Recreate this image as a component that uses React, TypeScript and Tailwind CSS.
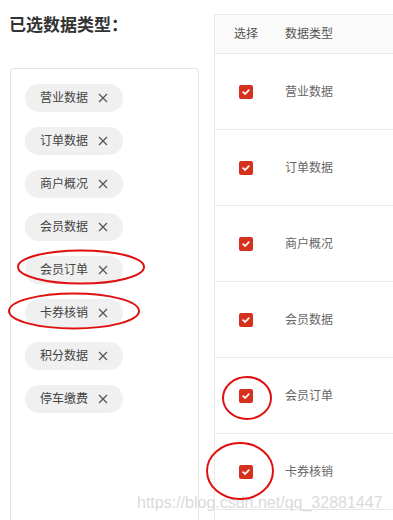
import React from "react";

const tags = ["营业数据", "订单数据", "商户概况", "会员数据", "会员订单", "卡券核销", "积分数据", "停车缴费"];
const rows = ["营业数据", "订单数据", "商户概况", "会员数据", "会员订单", "卡券核销"];

const font = { fontFamily: '"Liberation Sans", "Noto Sans CJK SC", sans-serif' };

function Check() {
  return (
    <span className="flex h-[14px] w-[14px] items-center justify-center rounded-[2px] bg-[#d7301c]">
      <svg width="10" height="10" viewBox="0 0 10 10" fill="none">
        <path d="M2.2 5.1 L4.2 7 L7.8 3.2" stroke="white" strokeWidth="1.8" strokeLinecap="round" strokeLinejoin="round" />
      </svg>
    </span>
  );
}

export default function App() {
  return (
    <div className="relative h-[520px] w-[393px] overflow-hidden bg-white" style={font}>
      <div className="flex">
        <div className="flex w-[199px] shrink-0 flex-col">
          <div className="pl-[9px] pt-[13px] text-[17px] font-bold leading-[26px] text-[#333]">已选数据类型：</div>
          <div className="ml-[10px] mt-[29px] h-[460px] rounded-t-[4px] border border-b-0 border-[#e4e4e4] pl-[14px] pt-[15px]">
            <div className="flex flex-col items-start gap-[15px]">
              {tags.map((t) => (
                <div key={t} className="flex h-[28px] items-center rounded-full bg-[#f0f0f0] pl-[15px] pr-[15px] text-[12px] text-[#444]">
                  <span>{t}</span>
                  <svg className="ml-[10px]" width="10" height="10" viewBox="0 0 10 10">
                    <path d="M1 1 L9 9 M9 1 L1 9" stroke="#555" strokeWidth="1.2" />
                  </svg>
                </div>
              ))}
            </div>
          </div>
        </div>
        <div className="ml-[15px] mt-[14px] w-[200px] shrink-0 border-l border-t border-[#e8e8e8]">
          <div className="flex h-[39px] items-center border-b border-[#e8e8e8] bg-[#fafafa] text-[12px] text-[#555]">
            <span className="w-[70px] pl-[19px]">选择</span>
            <span>数据类型</span>
          </div>
          {rows.map((r) => (
            <div key={r} className="flex h-[76px] items-center border-b border-[#e8e8e8] text-[12px] text-[#666]">
              <span className="flex w-[70px] pl-[24px]">
                <Check />
              </span>
              <span>{r}</span>
            </div>
          ))}
        </div>
      </div>
      <div className="pointer-events-none absolute left-[137px] top-[491px] text-[16px] text-[#d2d2d2] opacity-80" style={font}>
        https://blog.csdn.net/qq_32881447
      </div>
      <svg className="pointer-events-none absolute left-0 top-0" width="393" height="520" viewBox="0 0 393 520" fill="none">
        <ellipse cx="81" cy="267" rx="63" ry="16.5" stroke="#e01010" strokeWidth="2" />
        <ellipse cx="74" cy="311" rx="65" ry="17.5" stroke="#e01010" strokeWidth="2" />
        <ellipse cx="247" cy="398" rx="24" ry="21" stroke="#e01010" strokeWidth="2" />
        <ellipse cx="240" cy="471" rx="33" ry="28" stroke="#e01010" strokeWidth="2" />
      </svg>
    </div>
  );
}
